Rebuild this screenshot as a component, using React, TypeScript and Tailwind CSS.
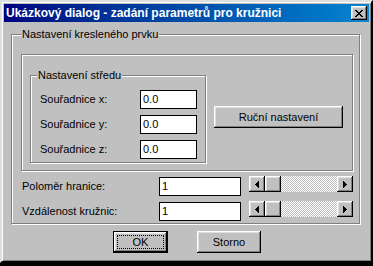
import type { ReactNode } from 'react'

// Win98 style dialog
const raised =
  'bg-[#c0c0c0] shadow-[inset_-1px_-1px_0_#000,inset_1px_1px_0_#fff,inset_-2px_-2px_0_#808080,inset_2px_2px_0_#dfdfdf]'
const etched = 'border border-[#808080] shadow-[1px_1px_0_#fff,inset_1px_1px_0_#fff]'

const Field = ({ value, className }: { value: string; className: string }) => (
  <div className={`h-[19px] bg-white border border-black pl-[2px] flex items-center leading-none ${className}`}>{value}</div>
)

const Arrow = ({ dir }: { dir: 'l' | 'r' }) => (
  <svg width="4" height="7" shapeRendering="crispEdges">
    {dir === 'l' ? (
      <g fill="#000">
        <rect x="0" y="3" width="1" height="1" />
        <rect x="1" y="2" width="1" height="3" />
        <rect x="2" y="1" width="1" height="5" />
        <rect x="3" y="0" width="1" height="7" />
      </g>
    ) : (
      <g fill="#000">
        <rect x="0" y="0" width="1" height="7" />
        <rect x="1" y="1" width="1" height="5" />
        <rect x="2" y="2" width="1" height="3" />
        <rect x="3" y="3" width="1" height="1" />
      </g>
    )}
  </svg>
)

const ScrollBar = ({ className }: { className: string }) => (
  <div className={`flex h-[16px] w-[104px] ${className}`}>
    <div className={`${raised} w-[16px] h-[16px] flex items-center justify-center pr-[1px]`}>
      <Arrow dir="l" />
    </div>
    <div className={`${raised} w-[16px] h-[16px]`} />
    <div className="flex-1 bg-[repeating-conic-gradient(#c0c0c0_0%_25%,#fff_0%_50%)] bg-[length:2px_2px]" />
    <div className={`${raised} w-[16px] h-[16px] flex items-center justify-center`}>
      <Arrow dir="r" />
    </div>
  </div>
)

const Legend = ({ children, className }: { children: ReactNode; className: string }) => (
  <span className={`absolute -top-[7px] px-[1px] bg-[#c0c0c0] leading-[13px] ${className}`}>{children}</span>
)

export default function App() {
  return (
    <div className="w-[373px] h-[266px] bg-black font-['Liberation_Sans',Arial,sans-serif] text-[11px] text-black">
      <div className="w-[373px] h-[263px] bg-[#c0c0c0] border-2 border-t-[#dfdfdf] border-l-[#dfdfdf] border-r-black border-b-black shadow-[inset_1px_1px_0_#fff,inset_-1px_-1px_0_#808080] p-[2px] flex flex-col">
        {/* title bar */}
        <div className="h-[18px] bg-gradient-to-r from-[#000080] to-[#1084d0] flex items-center pl-[2px] pr-[2px]">
          <span className="flex-1 text-white font-bold text-[12px] leading-none">
            Ukázkový dialog - zadání parametrů pro kružnici
          </span>
          <div className={`${raised} w-[16px] h-[14px] flex items-center justify-center`}>
            <svg width="8" height="7" shapeRendering="crispEdges">
              <path d="M0 0h2v1h-2zM6 0h2v1h-2zM1 1h2v1h-2zM5 1h2v1h-2zM2 2h4v1h-4zM3 3h2v1h-2zM2 4h4v1h-4zM1 5h2v1h-2zM5 5h2v1h-2zM0 6h2v1h-2zM6 6h2v1h-2z" fill="#000" />
            </svg>
          </div>
        </div>

        {/* body */}
        <div className="flex flex-col">
          <div className={`${etched} relative ml-[7px] mt-[12px] w-[349px] h-[190px]`}>
            <Legend className="left-[9px]">Nastavení kresleného prvku</Legend>

            <div className={`${etched} ml-[9px] mt-[19px] w-[332px] h-[117px] flex items-start`}>
              <div className={`${etched} relative ml-[8px] mt-[20px] w-[176px] h-[88px] flex flex-col gap-[6px] pt-[14px]`}>
                <Legend className="left-[6px]">Nastavení středu</Legend>
                {['x', 'y', 'z'].map((c) => (
                  <div key={c} className="flex items-center h-[19px] pl-[9px]">
                    <span className="w-[100px]">Souřadnice {c}:</span>
                    <Field value="0.0" className="w-[57px]" />
                  </div>
                ))}
              </div>
              <div className={`${raised} ml-[8px] mt-[51px] w-[129px] h-[22px] flex items-center justify-center`}>
                Ruční nastavení
              </div>
            </div>

            <div className="flex flex-col gap-[9px] mt-[5px] pl-[10px]">
              <div className="flex items-start h-[16px]">
                <span className="w-[137px] leading-[21px]">Poloměr hranice:</span>
                <Field value="1" className="w-[82px] mt-[1px]" />
                <ScrollBar className="ml-[8px]" />
              </div>
              <div className="flex items-start h-[16px]">
                <span className="w-[137px] leading-[21px]">Vzdálenost kružnic:</span>
                <Field value="1" className="w-[82px] mt-[1px]" />
                <ScrollBar className="ml-[8px]" />
              </div>
            </div>
          </div>

          <div className="flex mt-[7px] pl-[109px] gap-[29px]">
            <div className="w-[55px] h-[22px] border border-black">
              <div className={`${raised} w-full h-full p-[3px]`}>
                <div className="w-full h-full border border-dotted border-black flex items-center justify-center">OK</div>
              </div>
            </div>
            <div className={`${raised} w-[64px] h-[22px] flex items-center justify-center`}>Storno</div>
          </div>
        </div>
      </div>
    </div>
  )
}
